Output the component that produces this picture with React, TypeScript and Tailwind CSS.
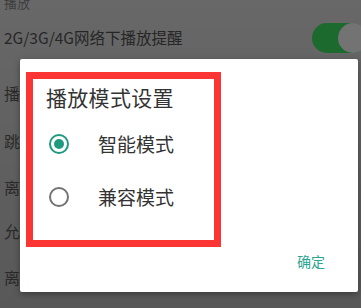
import React from "react";

const font = { fontFamily: '"Noto Sans CJK SC", "Noto Sans", sans-serif' };

function BgRow({ text, className = "" }: { text: string; className?: string }) {
  return (
    <div className={`h-[46px] flex items-center pl-[4px] text-[16px] text-[#2a2a2a] ${className}`}>
      {text}
    </div>
  );
}

function Radio({ checked }: { checked: boolean }) {
  return checked ? (
    <div className="w-[20px] h-[20px] rounded-full border-[2px] border-[#1f9a80] flex items-center justify-center">
      <div className="w-[10px] h-[10px] rounded-full bg-[#1f9a80]" />
    </div>
  ) : (
    <div className="w-[20px] h-[20px] rounded-full border-[2px] border-[#737373]" />
  );
}

export default function App() {
  return (
    <div
      className="relative w-[361px] h-[308px] overflow-hidden bg-gradient-to-b from-[#686868] to-[#585858]"
      style={font}
    >
      {/* background page */}
      <div className="flex flex-col">
        <div className="h-[13px] -mt-[4px] pl-[4px] text-[13px] leading-[13px] text-[#3e3e3e]">播放</div>
        <div className="h-[58px] flex items-center justify-between">
          <div className="pl-[4px] text-[15.5px] text-[#262626]">2G/3G/4G网络下播放提醒</div>
          <div className="w-[56px] h-[30px] -mr-[7px] rounded-full bg-[#1c6a2e] flex items-center justify-end">
            <div className="w-[30px] h-[30px] rounded-full bg-[#737373]" />
          </div>
        </div>
        <div className="mt-[3px]">
          <BgRow text="播放模式设置" />
          <BgRow text="跳过片头片尾" className="mt-[2px]" />
          <BgRow text="离线缓存设置" />
          <BgRow text="允许非WiFi下载" className="-mt-[2px]" />
          <BgRow text="离线下载路径" />
        </div>
      </div>

      {/* dialog */}
      <div className="absolute left-[20px] top-[59px] w-[338px] h-[233px] bg-white rounded-[2px] shadow-[0_2px_6px_rgba(0,0,0,0.35)] flex flex-col">
        <div className="ml-[6px] mt-[13px] w-[195px] h-[175px] border-[7px] border-[#fb3434] flex flex-col">
          <div className="pl-[13px] pt-[6px] text-[21px] leading-[24px] text-[#333333] tracking-[0.3px]">
            播放模式设置
          </div>
          <div className="mt-[22px] flex items-center h-[26px] pl-[16px]">
            <Radio checked />
            <div className="ml-[29px] text-[19px] leading-[24px] text-[#333333]">智能模式</div>
          </div>
          <div className="mt-[27px] flex items-center h-[26px] pl-[16px]">
            <Radio checked={false} />
            <div className="ml-[29px] text-[19px] leading-[24px] text-[#333333]">兼容模式</div>
          </div>
        </div>
        <div className="flex justify-end pr-[33px] mt-[4px]">
          <div className="text-[14px] leading-[20px] text-[#2aa592]">确定</div>
        </div>
      </div>
    </div>
  );
}
